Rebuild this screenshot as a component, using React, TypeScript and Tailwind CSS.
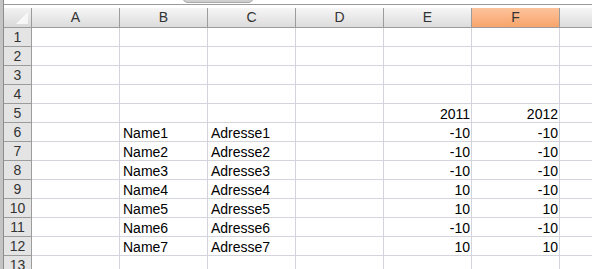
import React from "react";

const cols = ["A", "B", "C", "D", "E", "F"];
type Row = { b?: string; c?: string; e?: string; f?: string };
const data: Record<number, Row> = {
  5: { e: "2011", f: "2012" },
  6: { b: "Name1", c: "Adresse1", e: "-10", f: "-10" },
  7: { b: "Name2", c: "Adresse2", e: "-10", f: "-10" },
  8: { b: "Name3", c: "Adresse3", e: "-10", f: "-10" },
  9: { b: "Name4", c: "Adresse4", e: "10", f: "-10" },
  10: { b: "Name5", c: "Adresse5", e: "10", f: "10" },
  11: { b: "Name6", c: "Adresse6", e: "-10", f: "-10" },
  12: { b: "Name7", c: "Adresse7", e: "10", f: "10" },
};

export default function App() {
  const rows = Array.from({ length: 13 }, (_, i) => i + 1);
  return (
    <div
      className="w-[592px] h-[269px] overflow-hidden bg-white flex"
      style={{ fontFamily: '"Liberation Sans", Arial, sans-serif' }}
    >
      <div className="w-[4px] shrink-0 bg-[#c4c4c4] border-r border-[#8c8c8c]" />
      <div className="flex-1 flex flex-col min-w-0">
        <div className="h-[4px] shrink-0 bg-white relative">
          <div className="absolute left-[178px] top-[-6px] w-[72px] h-[9px] rounded-b-[6px] bg-[#cfcfcf] border border-[#a8a8a8]" />
        </div>
        <div className="h-[1px] shrink-0 bg-[#9a9a9a]" />
        <div className="h-[3px] shrink-0 bg-white" />
        {/* header */}
        <div className="flex h-[20px] shrink-0">
          <div className="w-[28px] shrink-0 bg-gradient-to-b from-[#f2f2f2] to-[#d9d9d9] border-r border-b border-[#9c9c9c] relative">
            <div
              className="absolute right-[3px] bottom-[3px] w-[12px] h-[12px] bg-gradient-to-br from-[#ffffff] to-[#f4f4f4]"
              style={{ clipPath: "polygon(100% 0, 100% 100%, 0 100%)" }}
            />
          </div>
          {cols.map((c) => (
            <div
              key={c}
              className={
                c === "F"
                  ? "w-[88px] shrink-0 flex items-center justify-center text-[14px] text-[#333] border-r border-b border-[#9c9c9c] bg-gradient-to-b from-[#fdc39c] to-[#f8a46b]"
                  : "w-[88px] shrink-0 flex items-center justify-center text-[14px] text-[#333] border-r border-b border-[#9c9c9c] bg-gradient-to-b from-[#f6f6f6] to-[#dcdcdc]"
              }
            >
              {c}
            </div>
          ))}
          <div className="flex-1 border-b border-[#9c9c9c] bg-gradient-to-b from-[#f6f6f6] to-[#dcdcdc]" />
        </div>
        {rows.map((r) => {
          const d = data[r] || {};
          const vals = ["", d.b || "", d.c || "", "", d.e || "", d.f || ""];
          return (
            <div key={r} className="flex h-[19px] shrink-0">
              <div className="w-[28px] shrink-0 flex items-start justify-center pt-[2px] leading-[15px] text-[14px] text-[#333] bg-[#e4e4e4] border-r border-b border-[#9c9c9c]">
                {r}
              </div>
              {vals.map((v, i) => (
                <div
                  key={i}
                  className={
                    i >= 4
                      ? "w-[88px] shrink-0 border-r border-b border-[#d4d4dc] flex items-start justify-end pt-[3px] pr-[1px] leading-[15px] text-[14px] text-black"
                      : "w-[88px] shrink-0 border-r border-b border-[#d4d4dc] flex items-start pt-[3px] pl-[3px] leading-[15px] text-[14px] text-black"
                  }
                >
                  {v}
                </div>
              ))}
              <div className="flex-1 border-b border-[#d4d4dc]" />
            </div>
          );
        })}
      </div>
    </div>
  );
}
